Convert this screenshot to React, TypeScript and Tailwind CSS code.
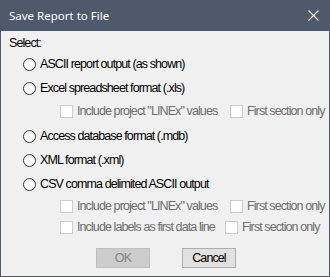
import type { ReactNode } from 'react';

const FONT = "font-['Liberation_Sans',Arial,sans-serif]";
const TXT = 'text-[12.5px] tracking-[-0.9px]';

function Radio({ label }: { label: string }) {
  return (
    <div className="flex h-[24px] items-center pl-[22px]">
      <span className="h-[13px] w-[13px] shrink-0 rounded-full border border-[#333333] bg-white" />
      <span className={'ml-[4px] text-black ' + TXT}>{label}</span>
    </div>
  );
}

function Check({ label, width }: { label: string; width?: string }) {
  return (
    <div className={'flex items-center ' + (width ?? '')}>
      <span className="h-[13px] w-[13px] shrink-0 border border-[#cccccc] bg-white" />
      <span className={'ml-[4px] whitespace-nowrap text-[#6d6d6d] ' + TXT}>{label}</span>
    </div>
  );
}

function CheckRow({ children, className }: { children: ReactNode; className: string }) {
  return <div className={'flex items-center pl-[59px] ' + className}>{children}</div>;
}

export default function App() {
  return (
    <div className={'flex h-[277px] w-[330px] flex-col border border-t-0 border-[#4e5a6b] bg-[#f0f0f0] ' + FONT}>
      <div className="flex h-[31px] shrink-0 items-center justify-between bg-[#4e5a6b] pl-[8px] pr-[10px]">
        <span className="font-['Noto_Sans',sans-serif] text-[11.5px] text-white">Save Report to File</span>
        <svg width="11" height="11" viewBox="0 0 11 11" className="mb-[1px]">
          <path d="M0.5 0.5 L10.5 10.5 M10.5 0.5 L0.5 10.5" stroke="#ffffff" strokeWidth="1.1" />
        </svg>
      </div>

      <div className="flex flex-col">
        <div className={'mt-[4px] h-[16px] pl-[8px] leading-[16px] text-black ' + TXT}>Select:</div>
        <div className="mt-[1px]" />
        <Radio label="ASCII report output (as shown)" />
        <Radio label="Excel spreadsheet format (.xls)" />
        <CheckRow className="h-[22px]">
          <Check label={'Include project "LINEx" values'} width="w-[170px]" />
          <Check label="First section only" />
        </CheckRow>
        <div className="mt-[2px]" />
        <Radio label="Access database format (.mdb)" />
        <Radio label="XML format (.xml)" />
        <Radio label="CSV comma delimited ASCII output" />
        <CheckRow className="h-[20px]">
          <Check label={'Include project "LINEx" values'} width="w-[170px]" />
          <Check label="First section only" />
        </CheckRow>
        <CheckRow className="h-[22px]">
          <Check label="Include labels as first data line" width="w-[165px]" />
          <Check label="First section only" />
        </CheckRow>

        <div className="mt-[10px] flex gap-[32px] pl-[95px]">
          <button
            disabled
            className={'h-[20px] w-[54px] border border-[#bfbfbf] bg-[#cccccc] leading-none text-[#838383] ' + TXT}
          >
            OK
          </button>
          <button className={'h-[20px] w-[54px] border border-[#adadad] bg-[#e1e1e1] leading-none text-black ' + TXT}>
            Cancel
          </button>
        </div>
      </div>
    </div>
  );
}
